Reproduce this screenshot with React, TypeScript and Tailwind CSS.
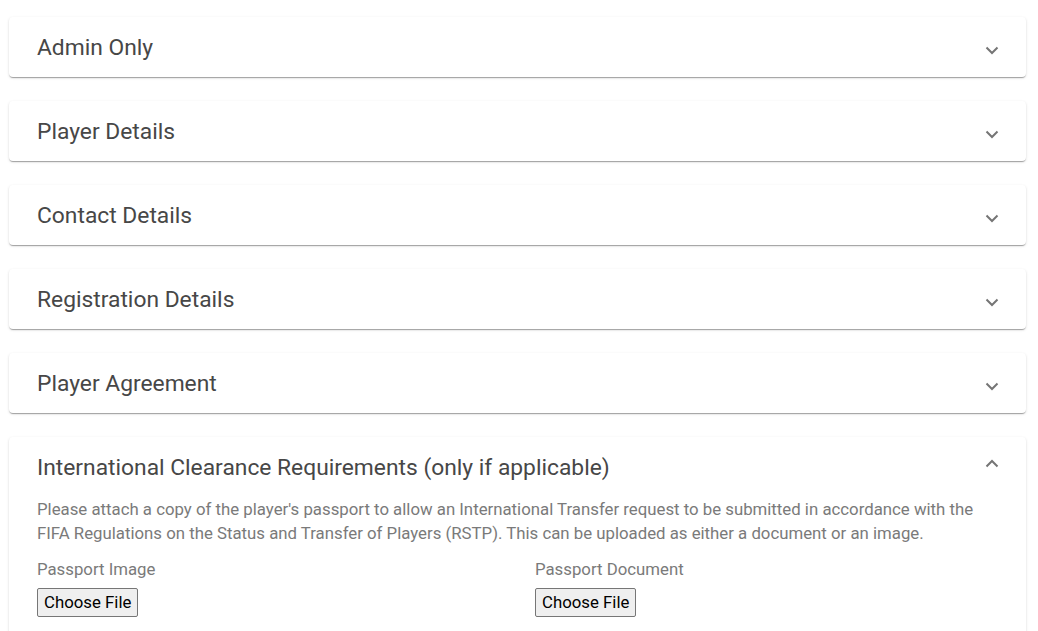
import React from 'react';

const sections = [
  'Admin Only',
  'Player Details',
  'Contact Details',
  'Registration Details',
  'Player Agreement',
];

const cardShadow =
  'shadow-[0px_2px_1px_-1px_rgba(0,0,0,0.2),0px_1px_1px_0px_rgba(0,0,0,0.14),0px_1px_3px_0px_rgba(0,0,0,0.12)]';

function Chevron({ open }: { open?: boolean }) {
  return (
    <svg
      width="14"
      height="9"
      viewBox="0 0 14 9"
      className={open ? 'mb-[8px]' : 'mt-[7px]'}
    >
      <path
        d={open ? 'M1.5 7.5 7 2l5.5 5.5' : 'M1.5 1.5 7 7l5.5-5.5'}
        fill="none"
        stroke="#757575"
        strokeWidth="2"
      />
    </svg>
  );
}

function FilePicker({ label }: { label: string }) {
  return (
    <div className="flex flex-col items-start">
      <span className="text-[16.8px] leading-[24px] text-[#7a7a7a]">{label}</span>
      <button className="mt-[7px] h-[29px] px-[6px] border border-[#767676] bg-[#efefef] rounded-[2px] text-[16.8px] leading-[19px] text-black">
        Choose File
      </button>
    </div>
  );
}

export default function App() {
  return (
    <div
      className="min-h-screen bg-white pt-[17px] pl-[9px] pr-[12px]"
      style={{ fontFamily: 'Roboto, "Liberation Sans", sans-serif' }}
    >
      <div className="flex flex-col gap-[24px]">
        {sections.map((title) => (
          <div key={title} className={`bg-white rounded-[4px] ${cardShadow}`}>
            <div className="h-[60px] flex items-center justify-between pl-[28px] pr-[27px]">
              <span className="mt-[2px] text-[22.8px] text-[#474747]">{title}</span>
              <Chevron />
            </div>
          </div>
        ))}

        <div className={`bg-white rounded-t-[4px] ${cardShadow}`}>
          <div className="h-[60px] flex items-center justify-between pl-[28px] pr-[27px]">
            <span className="mt-[2px] text-[22.8px] text-[#474747]">
              International Clearance Requirements (only if applicable)
            </span>
            <Chevron open />
          </div>
          <div className="px-[28px] pb-[24px]">
            <p className="text-[16.8px] leading-[24px] text-[#7a7a7a]">
              Please attach a copy of the player's passport to allow an International Transfer
              request to be submitted in accordance with the FIFA Regulations on the Status and
              Transfer of Players (RSTP). This can be uploaded as either a document or an image.
            </p>
            <div className="mt-[12px] grid grid-cols-[498px_1fr]">
              <FilePicker label="Passport Image" />
              <FilePicker label="Passport Document" />
            </div>
          </div>
        </div>
      </div>
    </div>
  );
}
